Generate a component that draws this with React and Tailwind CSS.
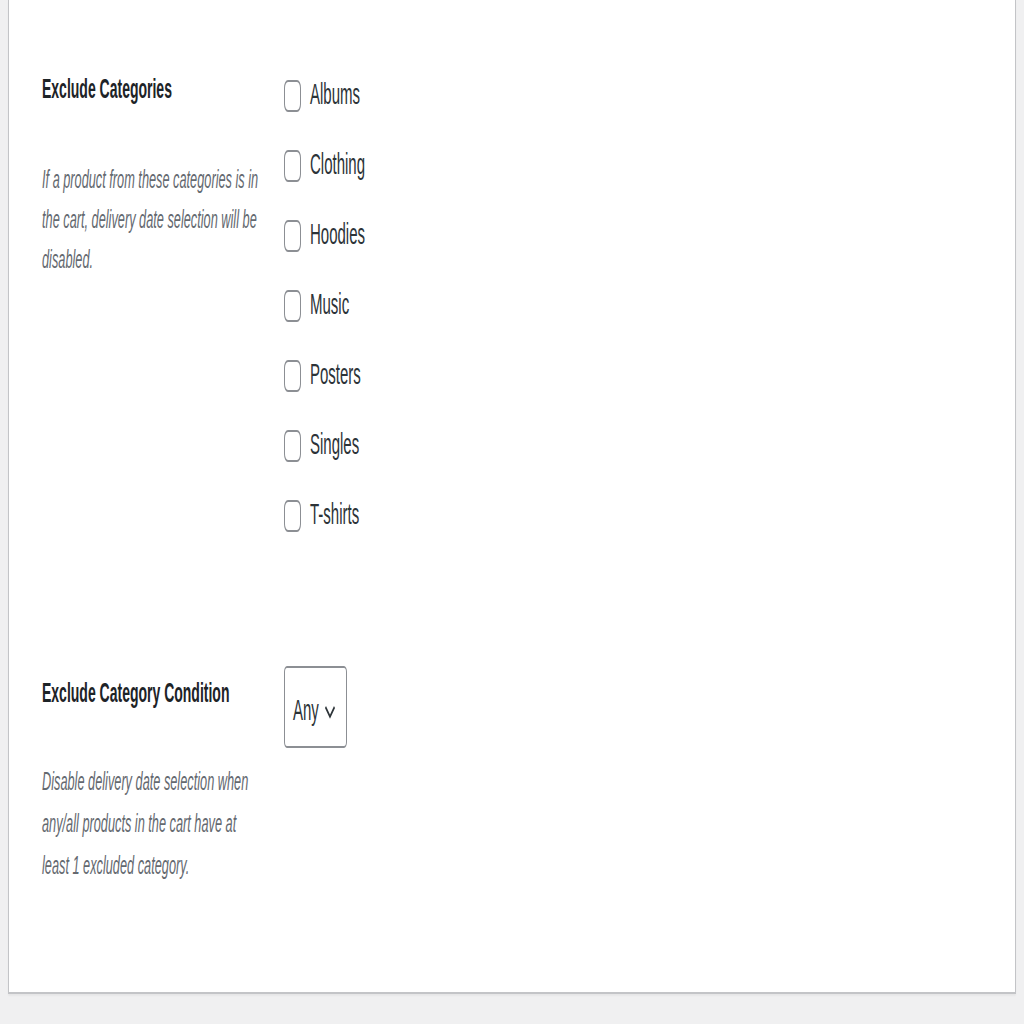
import React from "react";

const categories = ["Albums", "Clothing", "Hoodies", "Music", "Posters", "Singles", "T-shirts"];

// The reference is a settings screenshot stretched 2x vertically, so the page
// is laid out at half height and scaled on the y axis.
const Chevron = () => (
  <svg width="12" height="8" viewBox="0 0 12 8" fill="none" className="ml-[5px] mt-[1px]">
    <path d="M1.5 1.5 L6 6.3 L10.5 1.5" stroke="#2c3338" strokeWidth="1.4" />
  </svg>
);

const App = () => {
  return (
    <div className="h-[1024px] w-[1024px] overflow-hidden bg-[#f0f0f1] font-['Liberation_Sans',Arial,sans-serif]">
      <div className="h-[512px] origin-top scale-y-200">
        <div className="ml-[8px] mr-[8px] h-[497px] bg-white border-l border-r border-b border-[#c3c4c7] shadow-[0_1px_1px_rgba(0,0,0,0.04)] pl-[33px]">
          {/* Exclude Categories */}
          <div className="flex pt-[30px]">
            <div className="w-[242px] shrink-0 pt-[4px] pr-[22px]">
              <h3 className="text-[14px] leading-[20px] font-semibold text-[#1d2327]">
                Exclude Categories
              </h3>
              <p className="mt-[26px] text-[12.75px] leading-[20px] italic text-[#646970]">
                If a product from these categories is in the cart, delivery date selection will be disabled.
              </p>
            </div>
            <div className="flex flex-col">
              {categories.map((cat) => (
                <label key={cat} className="flex items-center h-[35px]">
                  <span className="w-[17px] h-[16px] rounded-[4px] border border-[#8c8f94] bg-white" />
                  <span className="ml-[9px] text-[15px] text-[#2c3338]">{cat}</span>
                </label>
              ))}
            </div>
          </div>

          {/* Exclude Category Condition */}
          <div className="flex mt-[58px]">
            <div className="w-[242px] shrink-0 pt-[3px] pr-[22px]">
              <h3 className="text-[14px] leading-[20px] font-semibold text-[#1d2327]">
                Exclude Category Condition
              </h3>
              <p className="mt-[24px] text-[12.75px] leading-[21px] italic text-[#646970]">
                Disable delivery date selection when any/all products in the cart have at least 1 excluded category.
              </p>
            </div>
            <div className="flex items-center w-[63px] h-[41px] rounded-[3px] border border-[#8c8f94] pl-[8px] pt-[3px] text-[15px] text-[#2c3338]">
              <span>Any</span>
              <Chevron />
            </div>
          </div>
        </div>
      </div>
    </div>
  );
};

export default App;
